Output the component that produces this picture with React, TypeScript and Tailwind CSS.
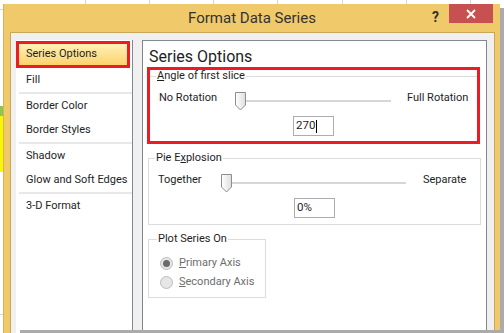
const textCls = 'whitespace-nowrap text-[11px] text-[#1e1e1e]';

function Thumb() {
  return (
    <svg width="11" height="19" viewBox="0 0 11 19" className="shrink-0">
      <defs>
        <linearGradient id="tg" x1="0" y1="0" x2="1" y2="0">
          <stop offset="0" stopColor="#ffffff" />
          <stop offset="1" stopColor="#dedede" />
        </linearGradient>
      </defs>
      <path d="M0.5 0.5 H10.5 V13 L5.5 18 L0.5 13 Z" fill="url(#tg)" stroke="#8e8e8e" />
    </svg>
  );
}

function Slider({ className }: { className: string }) {
  return (
    <div className={`flex h-[19px] items-start ${className}`}>
      <Thumb />
      <div className="mt-[8px] h-[2px] flex-1 bg-[#d6d6d6]" />
    </div>
  );
}

function ValueBox({ value, caret }: { value: string; caret?: boolean }) {
  return (
    <div className="mx-auto flex h-[20px] w-[41px] items-center border border-[#abadb3] bg-white pl-[2px]">
      <span className="text-[11.5px] leading-none text-[#1e1e1e]">{value}</span>
      {caret && <span className="ml-px h-[13px] w-px bg-black" />}
    </div>
  );
}

function Radio({ checked, label, u }: { checked?: boolean; label: string; u: string }) {
  return (
    <div className="flex h-[19px] items-center">
      <div className="flex h-[13px] w-[13px] items-center justify-center rounded-full border border-[#bcbcbc] bg-[#e6e6e6]">
        {checked && <div className="h-[7px] w-[7px] rounded-full bg-[#6b6b6b]" />}
      </div>
      <span className="ml-[6px] whitespace-nowrap text-[11px] text-[#6d6d6d]">
        <span className="underline">{u}</span>
        {label}
      </span>
    </div>
  );
}

const navItems = [
  ['Fill'],
  ['Border Color', 'Border Styles'],
  ['Shadow', 'Glow and Soft Edges'],
  ['3-D Format'],
];

export default function App() {
  return (
    <div className="relative flex h-[333px] w-[504px] flex-col overflow-hidden bg-white font-['Roboto',sans-serif]">
      {/* sheet grid behind the dialog */}
      <div className="flex h-[4px] shrink-0">
        <div className="w-[86px] border-r border-[#d4d4d4]" />
        <div className="w-[64px] border-r border-[#d4d4d4]" />
        <div className="w-[64px] border-r border-[#d4d4d4]" />
        <div className="w-[64px] border-r border-[#d4d4d4]" />
        <div className="w-[65px] border-r border-[#d4d4d4]" />
        <div className="w-[64px] border-r border-[#d4d4d4]" />
        <div className="w-[64px] border-r border-[#d4d4d4]" />
      </div>

      <div className="flex flex-1">
        <div className="flex w-[3px] flex-col">
          <div className="h-[6px] border-b border-[#d4d4d4]" />
          <div className="h-[96px]" />
          <div className="h-[10px] bg-[#8dc454]" />
          <div className="h-[56px] bg-[#f7f700]" />
          <div className="h-[143px] border-b border-[#d4d4d4]" />
        </div>

        {/* dialog */}
        <div className="flex w-[497px] flex-col border-l border-[#d9b35c] bg-[#f0c96b]">
          <div className="relative flex h-[28px] shrink-0 items-center justify-center">
            <span className="text-[15px] text-[#333333]">Format Data Series</span>
            <span className="absolute right-[61px] top-[4px] text-[14px] font-bold leading-[18px] text-[#333333]">?</span>
            <div className="absolute right-[7px] top-0 flex h-[19px] w-[44px] items-center justify-center bg-[#c75050]">
              <svg width="10" height="10" viewBox="0 0 10 10">
                <path d="M1 1 L9 9 M9 1 L1 9" stroke="#ffffff" strokeWidth="1.8" />
              </svg>
            </div>
          </div>

          <div className="ml-[6px] mr-[5px] flex flex-1 border-l border-t border-r border-[#c9a75a] bg-[#f0f0f0] pl-[5px] pt-[7px]">
            {/* nav */}
            <div className="w-[117px] border-r border-[#828790] bg-white">
              <div className="mt-px flex h-[27px] w-[114px] items-center border-[3px] border-[#ed1c24] bg-[linear-gradient(to_bottom,#fef1b8,#fbd36c)] pl-[7px]">
                <span className={textCls}>Series Options</span>
              </div>
              {navItems.map((group, gi) => (
                <div key={gi}>
                  {gi > 0 && <div className="ml-[3px] h-[2px] bg-[#e8e8e8]" />}
                  {group.map((item) => (
                    <div key={item} className="flex h-[24px] items-center pl-[10px] pt-px">
                      <span className={textCls}>{item}</span>
                    </div>
                  ))}
                </div>
              ))}
            </div>

            {/* options panel */}
            <div className="ml-[9px] w-[345px] border border-b-0 border-[#828790] bg-white px-[5px]">
              <div className="mt-[6px] h-[20px] pl-px text-[16px] leading-[20px] text-[#1e1e1e]">Series Options</div>

              <div className="-ml-px w-[333px] border-[3px] border-[#ed1c24]">
                <fieldset className="border-t border-[#dcdcdc] pb-[5px]">
                  <legend className={`ml-[6px] px-px leading-[12px] ${textCls}`}>
                    <span className="underline">A</span>ngle of first slice
                  </legend>
                  <div className="mt-[10px] flex pl-[9px]">
                    <span className={`w-[76px] leading-[12px] ${textCls}`}>No Rotation</span>
                    <Slider className="w-[156px]" />
                    <span className={`ml-[16px] leading-[12px] ${textCls}`}>Full Rotation</span>
                  </div>
                  <div className="mt-[5px]">
                    <ValueBox value="270" caret />
                  </div>
                </fieldset>
              </div>

              <fieldset className="mt-[8px] w-[333px] border border-[#dcdcdc] pb-[6px]">
                <legend className={`ml-[6px] px-px leading-[12px] ${textCls}`}>
                  Pie E<span className="underline">x</span>plosion
                </legend>
                <div className="mt-[10px] flex pl-[9px]">
                  <span className={`w-[63px] leading-[12px] ${textCls}`}>Together</span>
                  <Slider className="w-[185px]" />
                  <span className={`ml-[17px] leading-[12px] ${textCls}`}>Separate</span>
                </div>
                <div className="mt-[5px]">
                  <ValueBox value="0%" />
                </div>
              </fieldset>

              <fieldset className="mt-[8px] w-[118px] border border-[#dcdcdc] pb-[5px] pl-[11px]">
                <legend className={`-ml-[3px] px-px leading-[12px] ${textCls}`}>Plot Series On</legend>
                <div className="mt-[9px]">
                  <Radio checked u="P" label="rimary Axis" />
                  <Radio u="S" label="econdary Axis" />
                </div>
              </fieldset>
            </div>
          </div>
        </div>

        <div className="mt-[4px] w-[4px] bg-[#ababab]" />
      </div>

      <div className="absolute bottom-0 left-[20px] h-[3px] w-[484px] bg-[#ababab]" />
    </div>
  );
}
